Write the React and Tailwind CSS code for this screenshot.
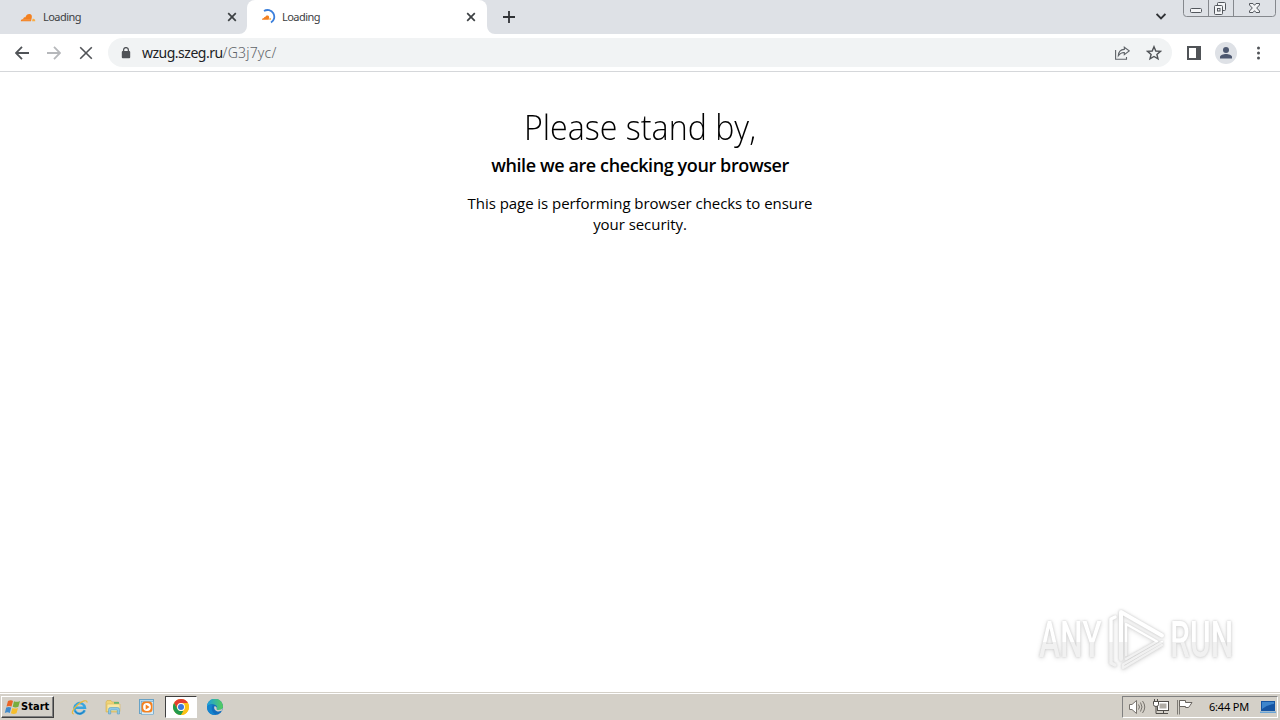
function Cloud({ className }) {
  return (
    <svg className={className} viewBox="0 0 16 9" fill="none">
      <path d="M.8 8.3C.8 6.9 2 6 3.2 6C3.3 4.9 4.2 4.2 5.3 4.4C6.1 2 7.7.9 9.4 1C11.3 1.2 12.2 2.5 11.8 4.4L11 8.3H.8Z" fill="#f38020" />
      <path d="M2.4 6.9H10.6" stroke="#f9b27a" strokeWidth=".5" />
      <path d="M12 8.3L12.6 5.8C14.3 5.4 15.5 6.6 15.2 8.3Z" fill="#fbad41" />
    </svg>
  )
}

function CloseIcon({ className }) {
  return (
    <svg className={className} viewBox="0 0 10 10" fill="none" stroke="#3c4043" strokeWidth="1.7">
      <path d="M1.2 1.2L8.8 8.8M8.8 1.2L1.2 8.8" />
    </svg>
  )
}

function TabStrip() {
  return (
    <div className="flex h-[34px] bg-[#dee1e6] text-[11px] text-[#3c4043]">
      <div className="flex h-[34px] w-[247px] items-center pl-5">
        <Cloud className="h-[9px] w-4" />
        <span className="ml-[7px] w-[184px] tracking-[-0.55px]">Loading</span>
        <CloseIcon className="size-[10px]" />
      </div>

      {/* Active tab */}
      <div className="relative flex h-[34px] w-[240px] items-center rounded-t-lg bg-white pl-[13px]">
        <svg className="absolute bottom-0 -left-2 size-2" viewBox="0 0 8 8">
          <path d="M8 0A8 8 0 0 1 0 8H8Z" fill="#fff" />
        </svg>
        <svg className="absolute -right-2 bottom-0 size-2" viewBox="0 0 8 8">
          <path d="M0 0A8 8 0 0 0 8 8H0Z" fill="#fff" />
        </svg>
        <svg className="size-4" viewBox="0 0 16 16" fill="none">
          <path d="M4 2A6.5 6.5 0 1 1 11 13.6" stroke="#3b7fdb" strokeWidth="1.8" />
          <path d="M2 10.8C2 9.7 2.8 9 3.8 9C3.9 8.2 4.6 7.8 5.2 8C5.7 6.7 6.8 6.1 8 6.6C9.1 7 9.2 8.1 9 9L8.7 10.8Z" fill="#f38020" />
          <path d="M9.1 10.8L9.6 8.8C10.7 8.7 11.2 9.6 11 10.8Z" fill="#fbad41" />
        </svg>
        <span className="ml-[6px] w-[184px] tracking-[-0.55px]">Loading</span>
        <CloseIcon className="size-[10px]" />
      </div>

      <div className="flex flex-1 items-center pl-4">
        <svg className="size-3" viewBox="0 0 12 12" stroke="#303236" strokeWidth="1.8">
          <path d="M6 0V12M0 6H12" />
        </svg>
      </div>
      <svg className="mt-[13px] mr-[17px] h-[7px] w-[10px]" viewBox="0 0 10 7" fill="none" stroke="#303236" strokeWidth="1.8">
        <path d="M.6 1L5 5.4L9.4 1" />
      </svg>

      {/* Window buttons */}
      <svg className="mr-1 h-[17px] w-[93px]" viewBox="0 0 93 17" fill="none" stroke="#85888d">
        <path d="M.5 0V13.5Q.5 16.5 3.5 16.5H89.5Q92.5 16.5 92.5 13.5V0M25.5 0V16M50.5 0V16" />
        <g stroke="#53575d" fill="#f3f4f6">
          <rect x="7.5" y="8.5" width="11" height="4" rx="1" />
          <rect x="34.5" y="2.5" width="8" height="8" rx="1" />
          <rect x="31.5" y="5.5" width="8" height="9" rx="1" />
          <rect x="34.5" y="8.5" width="2.5" height="2.5" />
          <path d="M66.5 3.5H70L71.5 5.3L73 3.5H76.5V5L73.7 8L76.5 11V12.5H73L71.5 10.7L70 12.5H66.5V11L69.3 8L66.5 5Z" />
        </g>
      </svg>
    </div>
  )
}

function Toolbar() {
  return (
    <div className="flex h-[38px] items-center border-b border-[#d5d7da] bg-white">
      <div className="flex w-[108px] items-center gap-[18px] pl-[15px]">
        <svg className="size-[14px]" viewBox="0 0 14 14" fill="none" stroke="#505357" strokeWidth="1.8">
          <path d="M14 7H1.2M7 .8L.9 7L7 13.2" />
        </svg>
        <svg className="size-[14px]" viewBox="0 0 14 14" fill="none" stroke="#b6b8bb" strokeWidth="1.8">
          <path d="M0 7H12.8M7 .8L13.1 7L7 13.2" />
        </svg>
        <svg className="size-[14px]" viewBox="0 0 14 14" fill="none" stroke="#505357" strokeWidth="1.6">
          <path d="M1.2 1.2L12.8 12.8M12.8 1.2L1.2 12.8" />
        </svg>
      </div>

      {/* Address bar */}
      <div className="flex h-[29px] w-[1064px] items-center rounded-full bg-[#f1f3f4] pr-[10px] pl-[13px]">
        <svg className="h-3 w-[10px]" viewBox="0 0 10 12" fill="none">
          <rect x=".8" y="4" width="8.4" height="7.2" rx="1" fill="#505357" />
          <path d="M2.6 4.5V3A2.4 2.4 0 0 1 7.4 3V4.5" stroke="#505357" strokeWidth="1.3" />
        </svg>
        <div className="ml-[11px] flex-1 text-[14px] tracking-[-0.5px] text-[#202124]">
          wzug.szeg.ru<span className="font-light tracking-[0.2px] text-[#5f6368]">/G3j7yc/</span>
        </div>
        <svg className="mr-4 h-[14px] w-4" viewBox="0 0 16 14" fill="none" stroke="#5f6368" strokeWidth="1.1">
          <path d="M1.6 4V13.3H12.5V11" />
          <path d="M10.3 1.2L15.2 4.9L10.3 8.7V6.5C7.8 6.4 5.9 7.3 4.3 9.8C4.5 5.8 6.8 3.6 10.3 3.4Z" />
        </svg>
        <svg className="size-4" viewBox="0 0 16 16" fill="none" stroke="#505357" strokeWidth="1.4">
          <path d="M8 1.7L9.8 6L14.4 6.4L10.9 9.4L12 13.9L8 11.5L4 13.9L5.1 9.4L1.6 6.4L6.2 6Z" />
        </svg>
      </div>

      <svg className="ml-[15px] h-[14px] w-[14px]" viewBox="0 0 14 14">
        <path d="M0 0H14V14H0ZM2 2V12H9V2Z" fill="#505357" fillRule="evenodd" />
      </svg>
      <svg className="ml-[14px] size-[22px]" viewBox="0 0 22 22">
        <circle cx="11" cy="11" r="11" fill="#dee1e6" />
        <circle cx="11" cy="8" r="3" fill="#4d5870" />
        <path d="M5 16.5V15C5 13 8.5 12 11 12S17 13 17 15V16.5Z" fill="#4d5870" />
      </svg>
      <svg className="ml-[19px] h-[14px] w-[5px]" viewBox="0 0 5 14" fill="#505357">
        <circle cx="2.5" cy="2" r="1.5" />
        <circle cx="2.5" cy="7" r="1.5" />
        <circle cx="2.5" cy="12" r="1.5" />
      </svg>
    </div>
  )
}

function Watermark() {
  return (
    <div className="absolute right-[47px] bottom-[21px] flex h-[62px] items-center font-['Roboto'] text-[50px] leading-[62px] font-medium [filter:drop-shadow(0_0_1px_#cccccc)_drop-shadow(0_1px_2px_#e0e0e0)]">
      <div className="w-[69px]">
        <span className="inline-block origin-left scale-x-[0.635] bg-[linear-gradient(#ffffff_54%,#f1f1f1_54%)] bg-clip-text text-transparent">ANY</span>
      </div>
      <svg className="h-[62px] w-[57px]" viewBox="0 0 57 62" fill="none" strokeWidth="3.5" strokeLinejoin="round" strokeLinecap="round">
        <defs>
          <linearGradient id="markFill" gradientUnits="userSpaceOnUse" x1="0" y1="0" x2="0" y2="62">
            <stop offset=".54" stopColor="#fff" />
            <stop offset=".54" stopColor="#f1f1f1" />
          </linearGradient>
        </defs>
        <g stroke="url(#markFill)">
          <path d="M7 8L3 10V54L7 56" />
          <path d="M13 50V3L54 26.5" strokeWidth="4" />
          <path d="M18 46V15L49 32.5L18 50" strokeWidth="2.5" />
          <path d="M54 33L15 55.5V59L54 36" strokeWidth="2.5" />
        </g>
      </svg>
      <div className="ml-[5px] w-[63px]">
        <span className="inline-block origin-left scale-x-[0.635] bg-[linear-gradient(#ffffff_54%,#f1f1f1_54%)] bg-clip-text text-transparent">RUN</span>
      </div>
    </div>
  )
}

function StartButton() {
  return (
    <div className="flex h-[22px] w-[53px] items-center border-t border-r border-b border-l border-t-white border-r-[#404040] border-b-[#404040] border-l-white pl-[2px] shadow-[inset_-1px_-1px_#808080]">
      <svg className="h-4 w-[17px]" viewBox="0 0 17 16">
        <path d="M4 2C6 1 8 1.1 9 2L7.5 7.5C6 6.7 4.3 6.7 2.5 7.4Z" fill="#ea6425" />
        <path d="M10 2.3C12 3.2 14 3 16 2L14.4 7.7C12.5 8.7 10.5 8.5 8.7 7.8Z" fill="#78ad3e" />
        <path d="M2.2 8.5C4 7.8 5.8 7.8 7.2 8.6L5.8 14C4.3 13.1 2.4 13.2.8 13.9Z" fill="#408acb" />
        <path d="M8.4 8.9C10.2 9.8 12.2 9.8 14 8.9L12.5 14.2C10.6 15.2 8.8 15.2 6.9 14.3Z" fill="#f6be2c" />
      </svg>
      <span className="font-['DejaVu_Sans_Condensed','DejaVu_Sans',sans-serif] text-[11px] font-bold tracking-[0.05px] text-black">Start</span>
    </div>
  )
}

function ExplorerIcon() {
  return (
    <svg className="size-[17px]" viewBox="0 0 17 17" fill="none">
      <path d="M13.7 11.3A5.3 5.3 0 1 1 14 8.8H4.8" stroke="#39a5df" strokeWidth="2.5" />
      <path d="M13.5 11.6A5.4 5.4 0 0 1 4 12.3" stroke="#1d77bc" strokeWidth="1" />
      <path d="M2.8 14.8C-.2 15 1.5 10.5 6.2 6.2C11 1.7 16.6.2 16 3.6" stroke="#e8b93c" strokeWidth="1.2" />
    </svg>
  )
}

function FolderIcon() {
  return (
    <svg className="size-4" viewBox="0 0 16 16">
      <path d="M1 3L2 1.5H6L7 3H13.5V13H1Z" fill="#f0d477" stroke="#d3ae4d" strokeWidth=".6" />
      <path d="M9 3H14V6H9Z" fill="#65b870" />
      <path d="M2 5H15V12.5H2Z" fill="#f9e8a3" stroke="#d7b65c" strokeWidth=".6" />
      <path d="M3.5 15V10.5Q3.5 8.5 5.5 8.5H12.5Q14.5 8.5 14.5 10.5V15H12.3V11H5.7V15Z" fill="#8cc8e6" stroke="#5a9fc5" strokeWidth=".6" />
    </svg>
  )
}

function PlayerIcon() {
  return (
    <svg className="size-4" viewBox="0 0 16 16">
      <rect x=".5" y=".5" width="14" height="14" fill="#b5d9ee" stroke="#67a2c6" />
      <rect x="2.5" y="2.5" width="12" height="13" fill="#d8eaf4" stroke="#67a2c6" strokeWidth=".6" />
      <rect x="2.5" y="2.5" width="11" height="11" rx="3.5" fill="#f58220" />
      <circle cx="8" cy="8" r="3.9" fill="#fff" />
      <path d="M6.7 5.5V10.5L10.6 8Z" fill="#f58220" />
    </svg>
  )
}

function ChromeIcon() {
  return (
    <svg className="size-4" viewBox="0 0 16 16">
      <circle cx="8" cy="8" r="8" fill="#fbc116" />
      <path d="M1.07 4A8 8 0 0 1 14.93 4H8A4 4 0 0 0 4.54 10Z" fill="#e43e31" />
      <path d="M1.07 4L4.54 10A4 4 0 0 0 8 12H11.4L8 16A8 8 0 0 1 1.07 4Z" fill="#229a4d" />
      <path d="M8 16L11.46 10A4 4 0 0 0 8 4H14.93A8 8 0 0 1 8 16Z" fill="#fbc116" />
      <circle cx="8" cy="8" r="3.9" fill="#fff" />
      <circle cx="8" cy="8" r="3" fill="#3b78dc" />
    </svg>
  )
}

function EdgeIcon() {
  return (
    <svg className="size-4" viewBox="0 0 16 16">
      <defs>
        <linearGradient id="edgeTop" x1="0" y1="0" x2="1" y2="0">
          <stop offset="0" stopColor="#1d9de0" />
          <stop offset="1" stopColor="#55ce59" />
        </linearGradient>
      </defs>
      <circle cx="8" cy="8" r="8" fill="#126dbd" />
      <path d="M0 8A8 8 0 0 1 16 7.2C16 10 13.8 11.3 11.4 11.2C9.5 11.1 9 10.4 9.7 9.5C10.8 7.7 9 5.5 6.2 5.2C3.2 4.9.7 6 0 8Z" fill="url(#edgeTop)" />
      <path d="M7.3 7.5C6.6 10 8.4 12.3 11.6 12.6L14.8 11.8L16 9C14.5 11 9 12 9.7 9.5C9.9 8 8.5 6.9 7.3 7.5Z" fill="#d4d0c8" />
      <path d="M5.9 6.5C3.6 8.5 4.6 13.8 9 15.8C3.6 16.7-.4 12.3.1 8C1.2 5.8 3.5 5 5.9 6.5Z" fill="#1584ce" />
    </svg>
  )
}

function Taskbar() {
  return (
    <div className="flex h-[28px] items-center border-t border-[#d4d0c8] bg-[#d4d0c8] pt-px pl-px shadow-[inset_0_1px_#fff]">
      <StartButton />
      <div className="ml-[17px] flex items-center gap-[17px]">
        <ExplorerIcon />
        <FolderIcon />
        <div className="pl-px">
          <PlayerIcon />
        </div>
      </div>
      <div className="ml-[10px] flex h-[22px] w-[32px] items-center justify-center border-t border-r border-b border-l border-t-[#404040] border-r-white border-b-white border-l-[#404040] bg-white">
        <ChromeIcon />
      </div>
      <div className="ml-[10px]">
        <EdgeIcon />
      </div>

      {/* Notification area */}
      <div className="mr-[2px] ml-auto flex h-[22px] w-[156px] items-center border-t border-r border-b border-l border-t-[#808080] border-r-white border-b-white border-l-[#808080] pl-[6px]">
        <svg className="h-4 w-[17px]" viewBox="0 0 17 16" fill="none" stroke="#77736d">
          <path d="M.5 5.5H3L7.5 1.5V14.5L3 10.5H.5Z" fill="#fff" />
          <path d="M9.5 5.5Q11.5 8 9.5 10.5M11.5 3.5Q14.5 8 11.5 12.5M13.5 2Q18 8 13.5 14" />
        </svg>
        <svg className="ml-[7px] h-4 w-[17px]" viewBox="0 0 17 16" fill="none" stroke="#504d49">
          <rect x="4.5" y="2.5" width="11" height="9" fill="#fff" />
          <rect x="6.5" y="4.5" width="7" height="5" fill="#b0aca5" stroke="none" />
          <path d="M6 14.5H15M10.5 11.5V14M3 7V14.5H6" />
          <path d="M.5 2.5V5.5Q.5 7.5 3 7.5T5.5 5.5V2.5Z" fill="#fff" />
          <path d="M1.5 0V2M4.5 0V2" />
        </svg>
        <svg className="ml-[7px] h-4 w-4" viewBox="0 0 16 16" fill="#fff" stroke="#68645f">
          <path d="M.5 1V15.5M2.5 1V15.5" strokeWidth=".8" />
          <path d="M2.5 1.5H8.5V3.5H15L13 6.5L11.5 8.5H8.5V7.5H2.5Z" />
        </svg>
        <span className="ml-4 w-[51px] text-[11px] tracking-[-0.2px] whitespace-nowrap text-black">6:44 PM</span>
        <svg className="h-[14px] w-4" viewBox="0 0 16 14">
          <path d="M1 1H15V11H1Z" fill="#1554a2" />
          <path d="M2 2H14V4Q7 5 2 9Z" fill="#3d85cc" />
          <path d="M0 11.5H16V13H0Z" fill="#6ba5d6" />
        </svg>
      </div>
    </div>
  )
}

export default function App() {
  return (
    <div className="flex h-[720px] w-[1280px] flex-col overflow-hidden bg-white font-['Noto_Sans','Open_Sans',sans-serif]">
      <TabStrip />
      <Toolbar />
      <main className="relative flex-1 pt-[30px] text-center font-['Open_Sans','Noto_Sans',sans-serif] text-black">
        <h1 className="scale-x-[0.92] text-[35px] leading-[50px] font-light">Please stand by,</h1>
        <h2 className="text-[18px] leading-[27px] font-semibold tracking-[-0.4px]">while we are checking your browser</h2>
        <p className="mx-auto mt-[14px] w-[380px] text-[15px] leading-[21px] tracking-[-0.05px]">
          This page is performing browser checks to ensure
          <br />
          your security.
        </p>
        <Watermark />
      </main>
      <Taskbar />
    </div>
  )
}
